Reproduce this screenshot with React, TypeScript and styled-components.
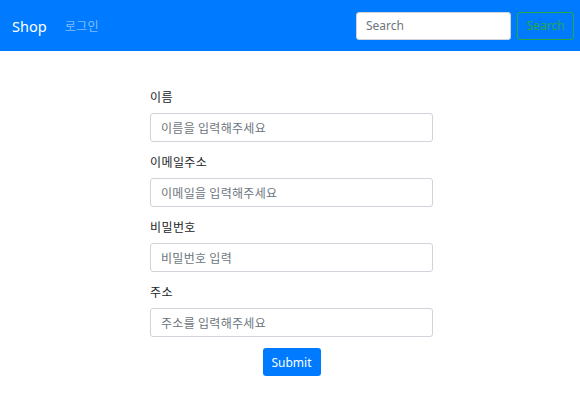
import React, { useState } from "react";
import styled, { createGlobalStyle } from "styled-components";

const GlobalStyle = createGlobalStyle`
  body {
    margin: 0;
    background: #fff;
    font-family: "Noto Sans", "Noto Sans CJK KR", sans-serif;
    color: #212529;
  }
  * { box-sizing: border-box; }
`;

const Navbar = styled.nav`
  height: 51px;
  background: #007bff;
  display: flex;
  align-items: center;
  padding: 0 6px 0 12px;
`;

const Brand = styled.a`
  color: #fff;
  font-size: 14.5px;
  text-decoration: none;
  margin-right: 18px;
`;

const NavLink = styled.a`
  color: rgba(255, 255, 255, 0.5);
  font-family: "Noto Sans CJK KR", sans-serif;
  font-size: 12px;
  letter-spacing: 0.4px;
  text-decoration: none;
`;

const SearchForm = styled.form`
  margin-left: auto;
  display: flex;
  gap: 6px;
`;

const SearchInput = styled.input`
  width: 155px;
  height: 28px;
  border: 1px solid #ced4da;
  border-radius: 3px;
  padding: 0 9px;
  font-family: "Noto Sans", sans-serif;
  font-size: 12px;
  outline: 0;
  &::placeholder { color: #6c757d; }
`;

const OutlineButton = styled.button`
  width: 57px;
  height: 28px;
  border: 1px solid #28a745;
  border-radius: 3px;
  background: transparent;
  color: #28a745;
  font-family: "Noto Sans", sans-serif;
  font-size: 12px;
  padding: 0;
`;

const Form = styled.form`
  width: 283px;
  margin: 37px 0 0 150px;
  display: flex;
  flex-direction: column;
`;

const Group = styled.div`
  display: flex;
  flex-direction: column;
  margin-bottom: 11px;
`;

const Label = styled.label`
  font-family: "Noto Sans CJK KR", sans-serif;
  font-size: 12px;
  letter-spacing: 0.4px;
  line-height: 18px;
  margin-bottom: 7px;
  color: #212529;
`;

const Input = styled.input`
  height: 29px;
  border: 1px solid #ced4da;
  border-radius: 3px;
  padding: 0 10px;
  font-family: "Noto Sans CJK KR", sans-serif;
  font-size: 12px;
  letter-spacing: 0.3px;
  color: #495057;
  outline: 0;
  &::placeholder { color: #6c757d; }
`;

const SubmitButton = styled.button`
  align-self: center;
  width: 58px;
  height: 28px;
  border: 0;
  border-radius: 3px;
  background: #007bff;
  color: #fff;
  font-family: "Noto Sans", sans-serif;
  font-size: 12px;
  padding: 0;
`;

const fields = [
  { label: "이름", placeholder: "이름을 입력해주세요", type: "text" },
  { label: "이메일주소", placeholder: "이메일을 입력해주세요", type: "email" },
  { label: "비밀번호", placeholder: "비밀번호 입력", type: "password" },
  { label: "주소", placeholder: "주소를 입력해주세요", type: "text" },
];

const App = () => {
  const [values, setValues] = useState<string[]>(["", "", "", ""]);
  return (
    <>
      <GlobalStyle />
      <Navbar>
        <Brand href="#">Shop</Brand>
        <NavLink href="#">로그인</NavLink>
        <SearchForm onSubmit={(e) => e.preventDefault()}>
          <SearchInput type="search" placeholder="Search" />
          <OutlineButton type="submit">Search</OutlineButton>
        </SearchForm>
      </Navbar>
      <Form onSubmit={(e) => e.preventDefault()}>
        {fields.map((f, i) => (
          <Group key={f.label}>
            <Label>{f.label}</Label>
            <Input
              type={f.type}
              placeholder={f.placeholder}
              value={values[i]}
              onChange={(e) =>
                setValues(values.map((v, j) => (j == i ? e.target.value : v)))
              }
            />
          </Group>
        ))}
        <SubmitButton type="submit">Submit</SubmitButton>
      </Form>
    </>
  );
};

export default App;
